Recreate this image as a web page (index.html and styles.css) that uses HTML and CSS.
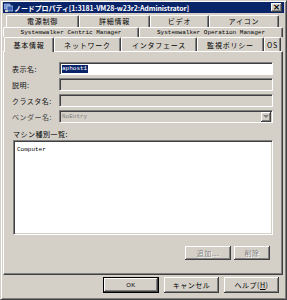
FILE: index.html
```html
<!DOCTYPE html>
<html lang="ja">
<head>
    <meta charset="UTF-8">
    <title>ノードプロパティ</title>
    <link rel="stylesheet" href="styles.css">
</head>
<body>
<div class="window">
    <!-- タイトルバー -->
    <div class="titlebar">
        <svg class="app-icon" width="9" height="9" viewBox="0 0 9 9">
            <rect x="0" y="1" width="6" height="5" fill="#6a8fd0" stroke="#c0d0f0" stroke-width="0.6"/>
            <rect x="3" y="3" width="6" height="5" fill="#3a60b0" stroke="#e0e8ff" stroke-width="0.6"/>
            <rect x="1" y="7" width="3" height="2" fill="#d0d0d0"/>
        </svg>
        <span class="title">ノードプロパティ[1:3181-VM28-w23r2:Administrator]</span>
        <span class="close-btn">×</span>
    </div>

    <!-- タブ -->
    <div class="tabs">
        <div class="tab-row row1">
            <div class="tab" style="width:73px">電源制御</div>
            <div class="tab" style="width:71px">詳細情報</div>
            <div class="tab" style="width:59px">ビデオ</div>
            <div class="tab" style="width:70px">アイコン</div>
        </div>
        <div class="tab-row row2">
            <div class="tab mono" style="width:136px">Systemwalker Centric Manager</div>
            <div class="tab mono" style="width:144px">Systemwalker Operation Manager</div>
        </div>
        <div class="tab-row row3">
            <div class="tab active" style="width:50px">基本情報</div>
            <div class="tab" style="width:67px">ネットワーク</div>
            <div class="tab" style="width:76px">インタフェース</div>
            <div class="tab" style="width:67px">監視ポリシー</div>
            <div class="tab" style="width:17px">OS</div>
        </div>
    </div>

    <!-- 基本情報パネル -->
    <div class="panel">
        <div class="form">
            <label>表示名:</label>
            <div class="field white"><span class="selected">aphost1</span></div>
            <label>説明:</label>
            <div class="field"></div>
            <label>クラスタ名:</label>
            <div class="field"></div>
            <label class="dim">ベンダー名:</label>
            <div class="field combo">
                <span class="combo-text">NoEntry</span>
                <span class="combo-btn"><span class="arrow"></span></span>
            </div>
        </div>
        <div class="list-label">マシン種別一覧:</div>
        <div class="listbox"><span class="mono-text">Computer</span></div>
        <div class="list-actions">
            <button class="btn small disabled" disabled>追加...</button>
            <button class="btn small disabled" disabled>削除</button>
        </div>
    </div>

    <!-- ダイアログボタン -->
    <div class="footer">
        <button class="btn default">OK</button>
        <button class="btn">キャンセル</button>
        <button class="btn">ヘルプ(<u>H</u>)</button>
    </div>
</div>
</body>
</html>
```

FILE: styles.css
```css
* {
    box-sizing: border-box;
}
body {
    margin: 0;
    background: #d4d0c8;
    font-family: "Noto Sans CJK JP", "DejaVu Sans", sans-serif;
    font-size: 7px;
    color: #000;
}
.window {
    width: 287px;
    height: 300px;
    background: #d4d0c8;
    border-top: 1px solid #d4d0c8;
    border-left: 1px solid #d4d0c8;
    border-right: 1px solid #404040;
    border-bottom: 1px solid #404040;
    box-shadow: inset 1px 1px 0 #fff, inset -1px -1px 0 #808080;
    padding: 1px 2px 0 2px;
    display: flex;
    flex-direction: column;
}
.titlebar {
    height: 11px;
    background: #0a246a;
    display: flex;
    align-items: center;
    padding: 0 2px 0 1px;
    color: #fff;
}
.app-icon {
    flex: none;
    margin-right: 1px;
}
.title {
    font-weight: bold;
    font-size: 7px;
    letter-spacing: -0.1px;
    white-space: nowrap;
    flex: 1;
}
.close-btn {
    width: 11px;
    height: 9px;
    background: #d4d0c8;
    color: #000;
    font-size: 9px;
    line-height: 8px;
    text-align: center;
    font-family: "DejaVu Sans", sans-serif;
    font-weight: bold;
    box-shadow: inset -1px -1px 0 #404040, inset 1px 1px 0 #fff, inset -2px -2px 0 #808080;
}
.tabs {
    margin-top: 2px;
}
.tab-row {
    display: flex;
}
.row1 {
    margin-left: 3px;
    height: 12px;
}
.row2 {
    margin-left: 0;
    height: 10px;
}
.row3 {
    margin-left: 1px;
    height: 14px;
}
.tab {
    flex: none;
    text-align: center;
    white-space: nowrap;
    overflow: hidden;
    border-top: 1px solid #fff;
    border-left: 1px solid #fff;
    border-right: 1px solid #404040;
    box-shadow: inset -1px 0 0 #808080;
    border-radius: 2px 2px 0 0;
    line-height: 10px;
    letter-spacing: 0.8px;
}
.row3 .tab {
    line-height: 13px;
    padding-top: 1px;
}
.tab.mono {
    font-family: "Liberation Mono", monospace;
    font-size: 6px;
    letter-spacing: 0;
    line-height: 9px;
}
.tab.active {
    position: relative;
    z-index: 1;
    background: #d4d0c8;
    height: 15px;
}
.panel {
    flex: none;
    height: 224px;
    margin-right: 1px;
    border-top: 1px solid #fff;
    border-left: 1px solid #fff;
    border-right: 1px solid #404040;
    border-bottom: 1px solid #404040;
    box-shadow: inset -1px -1px 0 #808080;
    padding: 10px 9px 0 8px;
}
.form {
    display: grid;
    grid-template-columns: 47px 1fr;
    row-gap: 3px;
    align-items: center;
}
.form label {
    color: #111;
    letter-spacing: 0.5px;
}
.form label.dim {
    color: #444;
}
.field {
    height: 13px;
    background: #d4d0c8;
    border-top: 1px solid #808080;
    border-left: 1px solid #808080;
    border-right: 1px solid #fff;
    border-bottom: 1px solid #fff;
    box-shadow: inset 1px 1px 0 #404040, inset -1px -1px 0 #d4d0c8;
    display: flex;
    align-items: center;
    padding-left: 2px;
}
.field.white {
    background: #fff;
    box-shadow: inset 1px 1px 0 #404040;
}
.selected {
    background: #0a246a;
    color: #fff;
    font-family: "Liberation Mono", monospace;
    font-size: 6px;
    line-height: 8px;
    padding: 0 1px 0 0;
}
.combo {
    justify-content: space-between;
    padding-right: 1px;
}
.combo-text {
    font-family: "Liberation Mono", monospace;
    font-size: 6px;
    color: #808080;
}
.combo-btn {
    width: 10px;
    height: 10px;
    background: #d4d0c8;
    box-shadow: inset -1px -1px 0 #404040, inset 1px 1px 0 #fff, inset -2px -2px 0 #808080;
    display: flex;
    align-items: center;
    justify-content: center;
}
.arrow {
    width: 0;
    height: 0;
    border-left: 3px solid transparent;
    border-right: 3px solid transparent;
    border-top: 3px solid #808080;
    margin-top: -1px;
}
.list-label {
    margin-top: 6px;
    margin-left: 1px;
    height: 10px;
    line-height: 10px;
    letter-spacing: 0.5px;
}
.listbox {
    margin-top: 1px;
    margin-left: 1px;
    height: 95px;
    background: #fff;
    border-top: 1px solid #808080;
    border-left: 1px solid #808080;
    border-right: 1px solid #fff;
    border-bottom: 1px solid #fff;
    box-shadow: inset 1px 1px 0 #404040, inset -1px -1px 0 #d4d0c8;
    padding: 2px 3px;
}
.mono-text {
    font-family: "Liberation Mono", monospace;
    font-size: 6px;
}
.list-actions {
    display: flex;
    justify-content: flex-end;
    gap: 3px;
    margin-top: 11px;
    padding-right: 3px;
}
.btn {
    font-family: "Noto Sans CJK JP", "DejaVu Sans", sans-serif;
    font-size: 7px;
    background: #d4d0c8;
    border: none;
    padding: 0;
    color: #000;
    height: 16px;
    width: 55px;
    box-shadow: inset -1px -1px 0 #404040, inset 1px 1px 0 #fff, inset -2px -2px 0 #808080;
    letter-spacing: 0.5px;
}
.btn.small {
    height: 14px;
}
.btn.small:first-child {
    width: 46px;
}
.btn.small:last-child {
    width: 36px;
}
.btn.disabled {
    color: #808080;
    text-shadow: 1px 1px 0 #fff;
}
.btn.default {
    width: 56px;
    box-shadow: inset 0 0 0 1px #000, inset -2px -2px 0 #404040, inset 2px 2px 0 #fff, inset -3px -3px 0 #808080;
    font-family: "Liberation Sans", sans-serif;
    font-size: 6px;
}
.footer {
    display: flex;
    justify-content: flex-end;
    gap: 5px;
    margin-top: 2px;
    padding-right: 5px;
}
```
